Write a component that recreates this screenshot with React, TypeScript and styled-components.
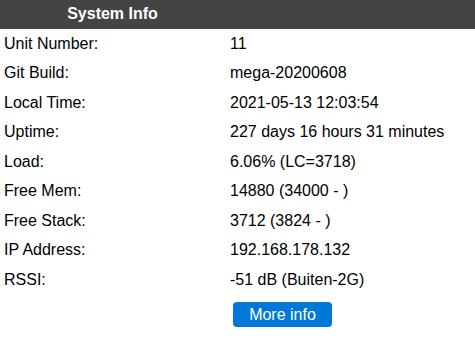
import { Fragment } from "react";
import styled, { createGlobalStyle } from "styled-components";

const GlobalStyle = createGlobalStyle`
  html, body {
    margin: 0;
    padding: 0;
    background: #fff;
  }
  body {
    font-family: "Liberation Sans", Arial, sans-serif;
    font-size: 16px;
    color: #000;
  }
`;

const rows: [string, string][] = [
  ["Unit Number:", "11"],
  ["Git Build:", "mega-20200608"],
  ["Local Time:", "2021-05-13 12:03:54"],
  ["Uptime:", "227 days 16 hours 31 minutes"],
  ["Load:", "6.06% (LC=3718)"],
  ["Free Mem:", "14880 (34000 - )"],
  ["Free Stack:", "3712 (3824 - )"],
  ["IP Address:", "192.168.178.132"],
  ["RSSI:", "-51 dB (Buiten-2G)"],
];

const InfoTable = styled.div`
  display: grid;
  grid-template-columns: 225px 1fr;
  width: 475px;
`;

const HeadCell = styled.div`
  height: 29px;
  background: #444;
  color: #fff;
  font-weight: bold;
  display: flex;
  align-items: center;
  justify-content: center;
  padding-bottom: 1px;
  box-sizing: border-box;
`;

const Cell = styled.div<{ $value?: boolean }>`
  height: 29.5px;
  display: flex;
  align-items: center;
  padding-left: ${(p) => (p.$value ? "5px" : "4px")};
  white-space: nowrap;
`;

const ButtonCell = styled.div`
  grid-column: 2;
  padding: 7.5px 0 0 8px;
`;

const MoreButton = styled.button`
  width: 99px;
  height: 25px;
  border: none;
  border-radius: 4px;
  background: #0078d7;
  color: #fff;
  font-family: "Liberation Sans", Arial, sans-serif;
  font-size: 16px;
  padding: 0;
  cursor: pointer;
`;

export default function App() {
  return (
    <>
      <GlobalStyle />
      <InfoTable>
        <HeadCell>System Info</HeadCell>
        <HeadCell />
        {rows.map(([label, value]) => (
          <Fragment key={label}>
            <Cell>{label}</Cell>
            <Cell $value>{value}</Cell>
          </Fragment>
        ))}
        <ButtonCell>
          <MoreButton>More info</MoreButton>
        </ButtonCell>
      </InfoTable>
    </>
  );
}
